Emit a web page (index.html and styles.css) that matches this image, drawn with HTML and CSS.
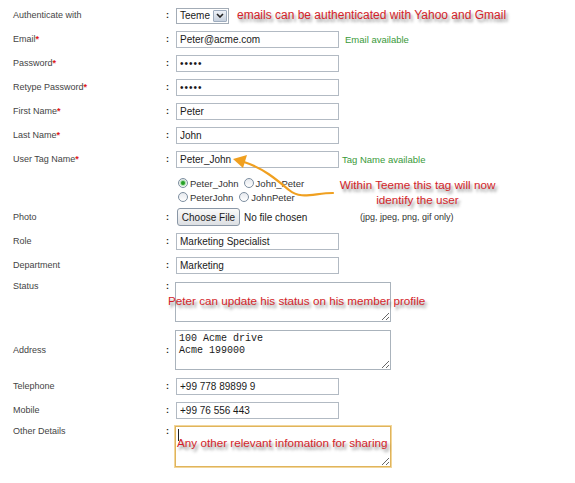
FILE: index.html
```html
<!DOCTYPE html>
<html>
<head>
<meta charset="utf-8">
<link rel="stylesheet" href="styles.css">
</head>
<body>
<div class="form">
  <div class="row">
    <div class="lbl">Authenticate with</div><div class="colon">:</div>
    <div class="fld">
      <div class="sel"><span class="sel-text">Teeme</span><span class="sel-btn"><svg width="8" height="5" viewBox="0 0 8 5"><path d="M1 1 L4 4 L7 1" fill="none" stroke="#222" stroke-width="1.6"/></svg></span></div>
      <span class="note note-auth">emails can be authenticated with Yahoo and Gmail</span>
    </div>
  </div>
  <div class="row">
    <div class="lbl">Email<span class="req">*</span></div><div class="colon">:</div>
    <div class="fld"><input class="txt" type="text" value="Peter@acme.com"><span class="ok ok-email">Email available</span></div>
  </div>
  <div class="row">
    <div class="lbl">Password<span class="req">*</span></div><div class="colon">:</div>
    <div class="fld"><input class="txt pw" type="password" value="12345"></div>
  </div>
  <div class="row">
    <div class="lbl">Retype Password<span class="req">*</span></div><div class="colon">:</div>
    <div class="fld"><input class="txt pw" type="password" value="12345"></div>
  </div>
  <div class="row">
    <div class="lbl">First Name<span class="req">*</span></div><div class="colon">:</div>
    <div class="fld"><input class="txt" type="text" value="Peter"></div>
  </div>
  <div class="row">
    <div class="lbl">Last Name<span class="req">*</span></div><div class="colon">:</div>
    <div class="fld"><input class="txt" type="text" value="John"></div>
  </div>
  <div class="row">
    <div class="lbl">User Tag Name<span class="req">*</span></div><div class="colon">:</div>
    <div class="fld"><input class="txt" type="text" value="Peter_John"><span class="ok ok-tag">Tag Name available</span></div>
  </div>
  <div class="row row-radios">
    <div class="lbl"></div><div class="colon"></div>
    <div class="fld radios">
      <div class="rline"><span class="radio on"></span><span class="rtext r1">Peter_John</span><span class="radio"></span><span class="rtext">John_Peter</span></div>
      <div class="rline"><span class="radio"></span><span class="rtext r2">PeterJohn</span><span class="radio"></span><span class="rtext">JohnPeter</span></div>
    </div>
  </div>
  <div class="row">
    <div class="lbl">Photo</div><div class="colon">:</div>
    <div class="fld"><span class="filebtn">Choose File</span><span class="nofile">No file chosen</span><span class="hint">(jpg, jpeg, png, gif only)</span></div>
  </div>
  <div class="row">
    <div class="lbl">Role</div><div class="colon">:</div>
    <div class="fld"><input class="txt" type="text" value="Marketing Specialist"></div>
  </div>
  <div class="row">
    <div class="lbl">Department</div><div class="colon">:</div>
    <div class="fld"><input class="txt" type="text" value="Marketing"></div>
  </div>
  <div class="row row-top row-status">
    <div class="lbl">Status</div><div class="colon">:</div>
    <div class="fld"><textarea class="area"></textarea></div>
  </div>
  <div class="row row-addr">
    <div class="lbl">Address</div><div class="colon">:</div>
    <div class="fld"><textarea class="area">100 Acme drive
Acme 199000</textarea></div>
  </div>
  <div class="row">
    <div class="lbl">Telephone</div><div class="colon">:</div>
    <div class="fld"><input class="txt" type="text" value="+99 778 89899 9"></div>
  </div>
  <div class="row">
    <div class="lbl">Mobile</div><div class="colon">:</div>
    <div class="fld"><input class="txt" type="text" value="+99 76 556 443"></div>
  </div>
  <div class="row row-top row-other">
    <div class="lbl">Other Details</div><div class="colon">:</div>
    <div class="fld"><textarea class="area area-focus"></textarea></div>
  </div>

  <svg class="arrow" width="120" height="50" viewBox="225 152 120 50">
    <path d="M333 193 C314 193 301 200 289 190 C277 180 263 168 244 162" fill="none" stroke="#f0a020" stroke-width="2.2" stroke-linecap="round"/>
    <path d="M233 159 L247 155 L243 168 Z" fill="#f0a020"/>
  </svg>
  <div class="note callout-tag">Within Teeme this tag will now<br>identify the user</div>
  <div class="note callout-status">Peter can update his status on his member profile</div>
  <div class="caret"></div>
  <div class="note callout-other">Any other relevant infomation for sharing</div>
</div>
</body>
</html>
```
FILE: styles.css
```css
html, body {
  margin: 0;
  padding: 0;
  background: #ffffff;
}
body {
  font-family: "Liberation Sans", Arial, sans-serif;
  color: #3a3a3a;
}
.form {
  position: relative;
  width: 575px;
  height: 483px;
  padding: 3px 0 0 13px;
  box-sizing: border-box;
}
.row {
  display: grid;
  grid-template-columns: 153px 10px 1fr;
  align-items: center;
  height: 24px;
}
.row-top {
  align-items: start;
}
.row-top .lbl, .row-top .colon {
  padding-top: 3px;
}
.row-status { height: 49px; }
.row-addr { height: 48px; }
.row-other { height: 48px; }
.row-radios { height: 34px; align-items: start; }
.lbl {
  font-size: 9px;
  line-height: 12px;
  color: #444;
}
.req {
  color: #e01818;
  font-weight: bold;
}
.colon {
  font-size: 9px;
  line-height: 12px;
  font-weight: bold;
  color: #222;
}
.fld {
  display: flex;
  align-items: center;
  font-size: 10px;
}
.txt {
  box-sizing: border-box;
  width: 163px;
  height: 17px;
  border: 1px solid #b2bac3;
  padding: 0 0 0 3px;
  margin: 0;
  font-family: "Liberation Sans", Arial, sans-serif;
  font-size: 10px;
  color: #1a1a1a;
  background: #fff;
  outline: none;
}
.pw {
  font-size: 10px;
  letter-spacing: 1px;
}
.ok {
  color: #3a9a3a;
  font-size: 9.5px;
}
.ok-email { margin-left: 6px; }
.ok-tag { margin-left: 3px; }
.sel {
  box-sizing: border-box;
  display: flex;
  align-items: center;
  width: 53px;
  height: 16px;
  border: 1px solid #a3acb6;
  background: #fff;
  margin-top: 1px;
}
.sel-text {
  flex: 1;
  padding-left: 3px;
  font-size: 10px;
  color: #1a1a1a;
}
.sel-btn {
  box-sizing: border-box;
  width: 14px;
  height: 12px;
  margin-right: 1px;
  border: 1px solid #9eacbe;
  border-radius: 1px;
  background: linear-gradient(#eef2f8, #c6d0dd);
  display: flex;
  align-items: center;
  justify-content: center;
}
.note {
  color: #d41f2a;
  font-size: 11.7px;
  line-height: 14px;
  text-shadow: 2px 3px 3px rgba(0, 0, 0, 0.45);
  white-space: nowrap;
}
.note-auth {
  margin-left: 8px;
  font-size: 12px;
}
.radios {
  flex-direction: column;
  align-items: flex-start;
  padding-top: 5px;
}
.rline {
  display: flex;
  align-items: center;
  height: 14px;
  font-size: 9.5px;
  color: #333;
}
.radio {
  box-sizing: border-box;
  width: 10px;
  height: 10px;
  border: 1px solid #7d8ea0;
  border-radius: 50%;
  background: linear-gradient(#e6e9ee, #ffffff);
  margin-left: 2px;
  margin-right: 2px;
  display: flex;
  align-items: center;
  justify-content: center;
}
.radio.on::after {
  content: "";
  width: 4px;
  height: 4px;
  border-radius: 50%;
  background: #26a026;
  box-shadow: 0 0 1px 1px rgba(80, 200, 80, 0.5);
}
.rtext { margin-right: 3px; }
.r1 { margin-right: 3px; }
.r2 { margin-right: 4px; }
.filebtn {
  box-sizing: border-box;
  width: 63px;
  height: 18px;
  margin-left: 1px;
  border: 1px solid #8a97a6;
  border-radius: 3px;
  background: linear-gradient(#fafafa, #dcdfe3);
  font-size: 10px;
  color: #1a1a1a;
  display: flex;
  align-items: center;
  justify-content: center;
}
.nofile {
  width: 116px;
  margin-left: 4px;
  font-size: 10px;
  color: #1a1a1a;
}
.hint {
  font-size: 9px;
  color: #333;
}
.area {
  box-sizing: border-box;
  width: 216px;
  height: 40px;
  margin: 0 0 0 -1px;
  border: 1px solid #aab3bc;
  padding: 2px 3px;
  font-family: "Liberation Mono", "Courier New", monospace;
  font-size: 10px;
  line-height: 12px;
  color: #1a1a1a;
  resize: both;
  outline: none;
}
.row-status .area { margin-top: 5px; }
.row-other .area { margin-top: 4px; height: 41px; }
.area-focus {
  border: 1px solid #e0b45c;
  box-shadow: 0 0 0 1px #f2d69a;
}
.arrow {
  position: absolute;
  left: 225px;
  top: 152px;
}
.callout-tag {
  position: absolute;
  left: 330px;
  top: 177px;
  width: 175px;
  text-align: center;
  line-height: 15px;
}
.callout-status {
  position: absolute;
  left: 168px;
  top: 294px;
}
.callout-other {
  position: absolute;
  left: 177px;
  top: 436px;
}
.caret {
  position: absolute;
  left: 178px;
  top: 429px;
  width: 1px;
  height: 12px;
  background: #222;
}
```
